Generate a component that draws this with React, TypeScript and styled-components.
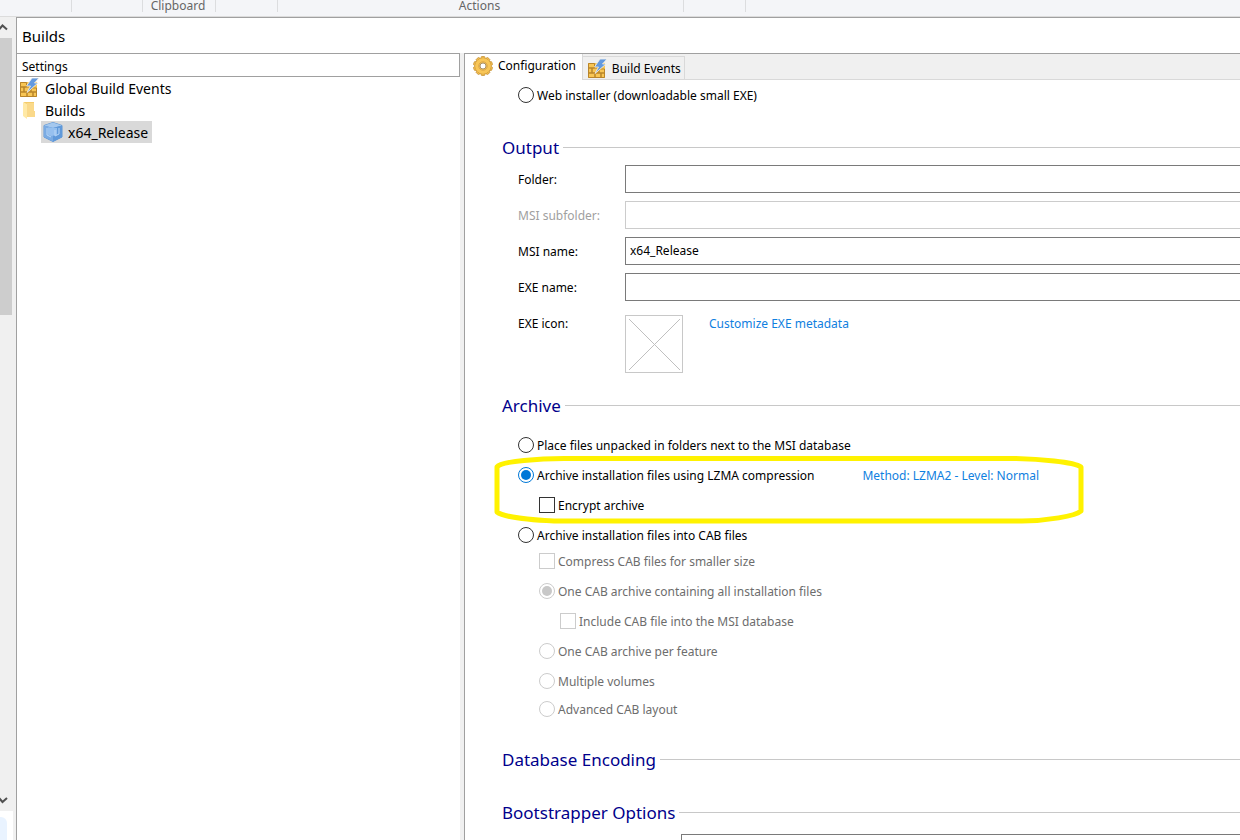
import React, { useState } from 'react';
import styled, { createGlobalStyle } from 'styled-components';

const GlobalStyle = createGlobalStyle`
  *, *::before, *::after { box-sizing: border-box; }
  body {
    margin: 0;
    background: #fff;
    color: #000;
    font-family: "Noto Sans", "Open Sans", sans-serif;
    font-size: 12px;
    line-height: 16px;
  }
  button, input { font: inherit; color: inherit; }
`;

const Window = styled.div`
  display: flex;
  flex-direction: column;
  height: 100vh;
  overflow: hidden;
`;

const Ribbon = styled.div`
  display: flex;
  flex: none;
  height: 17px;
  padding-bottom: 4px;
  background: #f4f5f8;
  border-bottom: 1px solid #dcdcdc;
`;

const RibbonGroup = styled.div<{ $width: number }>`
  flex: none;
  width: ${(p) => p.$width}px;
  padding-right: 2px;
  border-right: 1px solid #dcdddf;
  color: #666;
  line-height: 12px;
  text-align: center;
`;

const Workspace = styled.div`
  display: flex;
  flex: 1;
  min-height: 0;
`;

const ScrollStrip = styled.div`
  display: flex;
  flex-direction: column;
  flex: none;
  width: 16px;
  padding-right: 4px;
  background: #f0f0f0;
`;

const ScrollButton = styled.button`
  display: block;
  flex: none;
  height: 21px;
  padding: 0;
  border: 0;
  background: none;
`;

const ScrollTrack = styled.div`
  flex: 1;
`;

const ScrollThumb = styled.div`
  height: 277px;
  background: #cdcdcd;
`;

const DockedPanel = styled.div`
  flex: none;
  height: 29px;
  margin-right: -1px;
  padding: 6px 6px 0 0;
  background: #fff;
`;

const DockedCard = styled.div`
  height: 100%;
  border-radius: 0 6px 0 0;
  background: #e9f3ff;
`;

const Page = styled.div`
  display: flex;
  flex: 1;
  flex-direction: column;
  min-width: 0;
  border-top: 1px solid #a0a0a0;
  border-left: 1px solid #a0a0a0;
`;

const PageTitle = styled.h1`
  flex: none;
  height: 35px;
  margin: 0;
  padding-left: 5px;
  font-size: 15px;
  font-weight: 400;
  line-height: 36px;
`;

const Split = styled.div`
  display: flex;
  flex: 1;
  min-height: 0;
`;

const TreePane = styled.nav`
  flex: none;
  width: 443px;
`;

const TreeHeader = styled.div`
  height: 24px;
  padding-left: 5px;
  border: 1px solid #a0a0a0;
  border-left: 0;
  line-height: 25px;
`;

const TreeItem = styled.button<{ $level?: number; $selected?: boolean }>`
  display: flex;
  align-items: center;
  gap: ${(p) => (p.$level ? 5 : 6)}px;
  height: 22px;
  margin-left: ${(p) => (p.$level ? 24 : 2)}px;
  padding: 0 4px 0 ${(p) => (p.$level ? 2 : 0)}px;
  border: 0;
  background: ${(p) => (p.$selected ? '#d9d9d9' : 'transparent')};
  font-size: 14px;
  line-height: 24px;
  text-align: left;
`;

const TreeIcon = styled.span`
  display: flex;
  width: 20px;
  height: 20px;
`;

const TreeText = styled.span`
  padding-top: 2px;
`;

const Splitter = styled.div`
  flex: none;
  width: 4px;
  background: #f0f0f0;
`;

const Editor = styled.main`
  display: flex;
  flex: 1;
  flex-direction: column;
  min-width: 0;
  border-top: 1px solid #a0a0a0;
  border-left: 1px solid #a0a0a0;
`;

const Tabs = styled.div`
  display: flex;
  flex: none;
  height: 26px;
  background: #f0f0f0;
  border-bottom: 1px solid #d9d9d9;
`;

const Tab = styled.button<{ $active?: boolean }>`
  display: flex;
  align-items: center;
  gap: 5px;
  height: ${(p) => (p.$active ? 26 : 23)}px;
  margin-top: ${(p) => (p.$active ? 0 : 2)}px;
  padding: ${(p) => (p.$active ? '0 6px 2px 8px' : '1px 3px 0 4px')};
  border: 1px solid #d9d9d9;
  border-width: ${(p) => (p.$active ? '0 1px 0 0' : '1px 1px 0 0')};
  background: ${(p) => (p.$active ? '#fff' : '#f0f0f0')};
  white-space: nowrap;
`;

const Form = styled.form`
  display: flex;
  flex: 1;
  flex-direction: column;
  min-height: 0;
  overflow: hidden;
  padding: 7px 0 0 37px;
`;

const Heading = styled.h2<{ $before: number; $after: number }>`
  display: flex;
  align-items: center;
  flex: none;
  gap: 4px;
  height: 24px;
  margin: ${(p) => p.$before}px 0 ${(p) => p.$after}px;
  color: #00008b;
  font-size: 17px;
  font-weight: 400;
  line-height: 24px;

  &::after {
    content: '';
    flex: 1;
    height: 1px;
    margin-bottom: 2px;
    background: #c8c8c8;
  }
`;

const Field = styled.div`
  display: flex;
  flex: none;
  height: 28px;
  margin-bottom: 8px;
  padding-left: 16px;
`;

const FieldLabel = styled.label<{ $disabled?: boolean }>`
  flex: none;
  width: 107px;
  color: ${(p) => (p.$disabled ? '#a0a0a0' : '#000')};
  line-height: 30px;
`;

const TextInput = styled.input`
  flex: 1;
  min-width: 0;
  height: 28px;
  margin-right: -1px;
  padding: 0 4px 2px;
  border: 1px solid #7a7a7a;
  border-radius: 0;
  outline: 0;
  background: #fff;

  &:disabled { border-color: #ccc; }
`;

const IconField = styled(Field)`
  height: 58px;
  margin: 6px 0 0;
`;

const IconLabel = styled.span`
  flex: none;
  width: 107px;
  line-height: 18px;
`;

const IconWell = styled.button`
  display: flex;
  flex: none;
  width: 58px;
  height: 58px;
  margin-right: 26px;
  padding: 0;
  border: 1px solid #c8c8c8;
  background: #fff;
`;

const Link = styled.a`
  color: #0f80e0;
  text-decoration: none;
  line-height: 18px;
`;

const Option = styled.div<{ $level?: number; $gap?: number }>`
  display: flex;
  align-items: center;
  flex: none;
  gap: 3px;
  height: 16px;
  margin-top: ${(p) => p.$gap ?? 14}px;
  padding-left: ${(p) => 16 + 21 * (p.$level ?? 0)}px;
`;

const Mark = styled.input`
  appearance: none;
  flex: none;
  display: grid;
  place-items: center;
  width: 16px;
  height: 16px;
  margin: 0;
  border: 1px solid #333;
  background: #fff;

  &[type='radio'] { border-radius: 50%; }
  &[type='radio']:checked { border-color: #0078d7; }
  &[type='radio']:checked::before {
    content: '';
    width: 10px;
    height: 10px;
    border-radius: 50%;
    background: #0078d7;
  }
  &[type='checkbox']:checked::before {
    content: '';
    width: 8px;
    height: 8px;
    background: #333;
  }
  &:disabled, &[type='radio']:checked:disabled { border-color: #ccc; }
  &[type='radio']:checked:disabled::before { background: #c8c8c8; }
`;

const OptionLabel = styled.label<{ $disabled?: boolean }>`
  padding-top: 2px;
  color: ${(p) => (p.$disabled ? '#6d6d6d' : '#000')};
  white-space: nowrap;
`;

const Highlighted = styled.div`
  position: relative;
  flex: none;
`;

const Marker = styled.svg`
  position: absolute;
  top: 3px;
  left: -8px;
  pointer-events: none;
`;

const MethodLink = styled(Link)`
  margin-left: 45px;
  padding-top: 2px;
  white-space: nowrap;
`;

const BootstrapRow = styled.div`
  display: flex;
  flex: none;
  padding-left: 179px;
`;

const ChevronIcon = ({ down }: { down?: boolean }) => (
  <svg width="12" height="21" viewBox="0 0 12 21" aria-hidden="true">
    <path d={down ? 'M-1 8L2.500 12L7 8' : 'M-1 12.500L2.500 8.500L7 12.500'} fill="none" stroke="#505050" strokeWidth="2" />
  </svg>
);

const BuildEventsIcon = () => (
  <svg width="20" height="20" viewBox="0 0 20 20" aria-hidden="true">
    <path d="M1 4H18V19H1Z" fill="#f8c655" />
    <path d="M1.500 4.500H7.500V9H1.500ZM1.500 9H5V14H1.500ZM5 9H12V14H5ZM1.500 14H8V18.500H1.500ZM8 14H14V18.500H8ZM14 14H17.500V18.500H14ZM12 10H17.500V14H12Z" fill="none" stroke="#b9852b" />
    <path d="M13 0H20L15.500 5H19L8 14.500L11.500 8H7.500Z" fill="#6399df" stroke="#f6f3ea" strokeWidth="0.800" />
  </svg>
);

const FolderIcon = () => (
  <svg width="20" height="20" viewBox="0 0 20 20" aria-hidden="true">
    <path d="M5 2H15V11H16V17H6Z" fill="#f4cc6c" />
    <path d="M4 2L8 4V19L4 16Z" fill="#ffe9a6" />
    <path d="M8 3H15V11H16V17H8Z" fill="#fad98a" />
  </svg>
);

const PackageIcon = () => (
  <svg width="20" height="20" viewBox="0 0 20 20" aria-hidden="true">
    <path d="M10 0.500L19 3.500V15L10 19.500L1 15V3.500Z" fill="#5b95d6" stroke="#5b95d6" strokeLinejoin="round" />
    <path d="M10 0.500L19 3.500L10 6L1 3.500Z" fill="#a5c8ee" />
    <path d="M1 3.500L10 6V19.500L1 15Z" fill="#7aabe3" />
    <path d="M10 6L19 3.500V15L10 19.500Z" fill="#6099da" />
    <path d="M5 5.500L14 6V13L8 14L5 12.500Z" fill="#96c0ef" />
    <path d="M4 6V13L8 15M12 8V14L16 12V6" fill="none" stroke="#b9d7f7" />
  </svg>
);

const GearIcon = () => (
  <svg width="20" height="20" viewBox="-10 -10 20 20" aria-hidden="true">
    <g fill="#f6c24f" stroke="#c7933a" strokeWidth="0.800">
      {[0, 36, 72, 108, 144].map((angle) => (
        <rect key={angle} x="-2" y="-9.500" width="4" height="19" rx="1" transform={`rotate(${angle})`} />
      ))}
      <circle r="8" />
    </g>
    <circle r="7.800" fill="#f8c657" />
    <circle r="4.200" fill="none" stroke="#dba444" />
    <circle r="3" fill="#fff" stroke="#a99268" />
  </svg>
);

const EmptyIcon = () => (
  <svg width="56" height="56" viewBox="0 0 56 56" aria-hidden="true">
    <path d="M3 3L54 54M54 3L3 54" stroke="#c0c0c0" fill="none" />
  </svg>
);

type ChoiceProps = {
  id: string;
  label: string;
  kind?: 'radio' | 'checkbox';
  group?: string;
  level?: number;
  gap?: number;
  disabled?: boolean;
  checked?: boolean;
  onSelect?: () => void;
  children?: React.ReactNode;
};

const Choice = ({ id, label, kind = 'radio', group, level, gap, disabled, checked, onSelect, children }: ChoiceProps) => (
  <Option $level={level} $gap={gap}>
    <Mark
      id={id}
      type={kind}
      name={group ?? id}
      disabled={disabled}
      {...(onSelect ? { checked, onChange: onSelect } : { defaultChecked: checked })}
    />
    <OptionLabel htmlFor={id} $disabled={disabled}>{label}</OptionLabel>
    {children}
  </Option>
);

const ribbonGroups = [
  { width: 72, label: '' },
  { width: 71, label: '' },
  { width: 73, label: 'Clipboard' },
  { width: 62, label: '' },
  { width: 406, label: 'Actions' },
  { width: 62, label: '' },
];

const fields = [
  { id: 'folder', label: 'Folder:', value: '' },
  { id: 'subfolder', label: 'MSI subfolder:', value: '', disabled: true },
  { id: 'msi-name', label: 'MSI name:', value: 'x64_Release' },
  { id: 'exe-name', label: 'EXE name:', value: '' },
];

export default function App() {
  const [archive, setArchive] = useState('lzma');
  return (
    <>
      <GlobalStyle />
      <Window>
        <Ribbon>
          {ribbonGroups.map((group, i) => (
            <RibbonGroup key={i} $width={group.width}>{group.label}</RibbonGroup>
          ))}
        </Ribbon>
        <Workspace>
          <ScrollStrip>
            <ScrollButton type="button" aria-label="Scroll up"><ChevronIcon /></ScrollButton>
            <ScrollTrack><ScrollThumb /></ScrollTrack>
            <ScrollButton type="button" aria-label="Scroll down"><ChevronIcon down /></ScrollButton>
            <DockedPanel><DockedCard /></DockedPanel>
          </ScrollStrip>
          <Page>
            <PageTitle>Builds</PageTitle>
            <Split>
              <TreePane aria-label="Builds">
                <TreeHeader>Settings</TreeHeader>
                <TreeItem type="button">
                  <TreeIcon><BuildEventsIcon /></TreeIcon>
                  <TreeText>Global Build Events</TreeText>
                </TreeItem>
                <TreeItem type="button">
                  <TreeIcon><FolderIcon /></TreeIcon>
                  <TreeText>Builds</TreeText>
                </TreeItem>
                <TreeItem type="button" $level={1} $selected>
                  <TreeIcon><PackageIcon /></TreeIcon>
                  <TreeText>x64_Release</TreeText>
                </TreeItem>
              </TreePane>
              <Splitter />
              <Editor>
                <Tabs role="tablist">
                  <Tab type="button" role="tab" aria-selected="true" $active><GearIcon />Configuration</Tab>
                  <Tab type="button" role="tab" aria-selected="false"><BuildEventsIcon />Build Events</Tab>
                </Tabs>
                <Form onSubmit={(e) => e.preventDefault()}>
                  <Choice id="web" group="package" label="Web installer (downloadable small EXE)" gap={0} />

                  <Heading $before={33} $after={5}>Output</Heading>
                  {fields.map((f) => (
                    <Field key={f.id}>
                      <FieldLabel htmlFor={f.id} $disabled={f.disabled}>{f.label}</FieldLabel>
                      <TextInput id={f.id} type="text" defaultValue={f.value} disabled={f.disabled} />
                    </Field>
                  ))}
                  <IconField>
                    <IconLabel>EXE icon:</IconLabel>
                    <IconWell type="button" aria-label="EXE icon"><EmptyIcon /></IconWell>
                    <Link href="#metadata">Customize EXE metadata</Link>
                  </IconField>

                  <Heading $before={21} $after={5}>Archive</Heading>
                  <Choice id="unpacked" group="archive" label="Place files unpacked in folders next to the MSI database" checked={archive === 'unpacked'} onSelect={() => setArchive('unpacked')} />
                  <Highlighted>
                    <Choice id="lzma" group="archive" label="Archive installation files using LZMA compression" checked={archive === 'lzma'} onSelect={() => setArchive('lzma')}>
                      <MethodLink href="#method">Method: LZMA2 - Level: Normal</MethodLink>
                    </Choice>
                    <Choice id="encrypt" kind="checkbox" level={1} label="Encrypt archive" />
                    <Marker width="591" height="68" viewBox="0 0 591 68" aria-hidden="true">
                      <path
                        d="M3 11C5 8 14 6 30 4.500C44 3 56 2.500 70 2.500H519C545 3 580 6 587 11V55C582 60 552 65 528 65H60C38 64 9 61 3 56Z"
                        fill="none"
                        stroke="#fff200"
                        strokeWidth="5"
                        strokeLinejoin="round"
                      />
                    </Marker>
                  </Highlighted>
                  <Choice id="cab" group="archive" label="Archive installation files into CAB files" checked={archive === 'cab'} onSelect={() => setArchive('cab')} />
                  <Choice id="compress" kind="checkbox" level={1} gap={10} disabled label="Compress CAB files for smaller size" />
                  <Choice id="one-cab" group="cab-layout" level={1} disabled checked label="One CAB archive containing all installation files" />
                  <Choice id="include" kind="checkbox" level={2} disabled label="Include CAB file into the MSI database" />
                  <Choice id="per-feature" group="cab-layout" level={1} disabled label="One CAB archive per feature" />
                  <Choice id="volumes" group="cab-layout" level={1} disabled label="Multiple volumes" />
                  <Choice id="advanced" group="cab-layout" level={1} gap={12} disabled label="Advanced CAB layout" />

                  <Heading $before={31} $after={0}>Database Encoding</Heading>
                  <Heading $before={29} $after={9}>Bootstrapper Options</Heading>
                  <BootstrapRow>
                    <TextInput type="text" aria-label="Bootstrapper option" />
                  </BootstrapRow>
                </Form>
              </Editor>
            </Split>
          </Page>
        </Workspace>
      </Window>
    </>
  );
}
